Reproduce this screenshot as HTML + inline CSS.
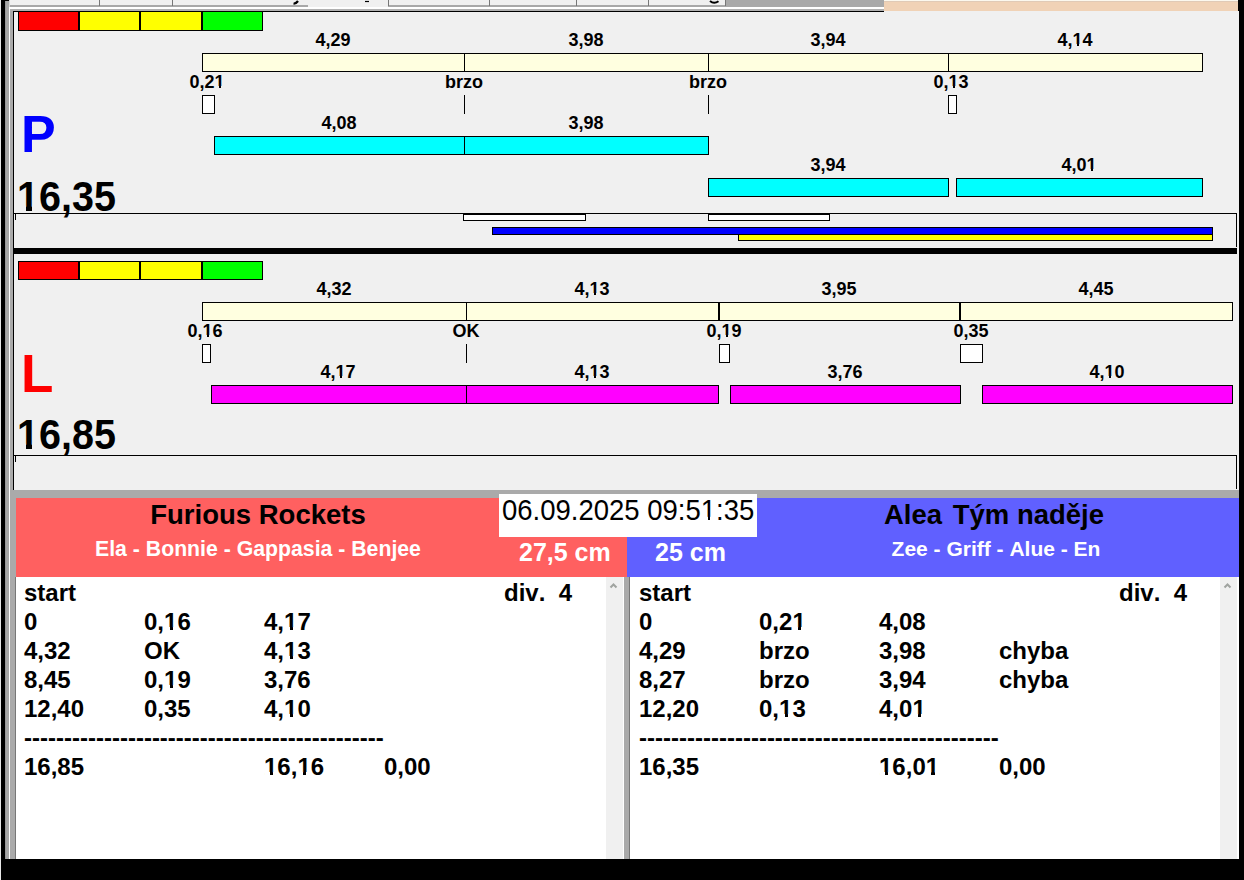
<!DOCTYPE html>
<html><head><meta charset="utf-8">
<style>
*{margin:0;padding:0;box-sizing:border-box}
html,body{width:1244px;height:880px;overflow:hidden;background:#000}
body{position:relative;font-kerning:none;font-family:"Liberation Sans",sans-serif;font-weight:bold;color:#000}
.a{position:absolute}
.bx{position:absolute;border:1px solid #000}
.lb{position:absolute;width:120px;text-align:center;font-size:18px;line-height:20px;white-space:nowrap}
.cr{background:#ffffe0}
.cy{background:#00ffff}
.mg{background:#ff00ff}
.wh{background:#fff}
.tk{position:absolute;width:1px;background:#000}
.ls{position:absolute;font-size:24px;line-height:29px}
.ls div{height:29px;position:relative}
.ls>div>span{position:absolute;top:0;white-space:pre}
.o{position:relative}
.o::before,.o::after{content:"";position:absolute;background:#f0f0f0;bottom:0.19em;height:0.14em}
.o::before{left:0.03em;width:0.203em}
.o::after{left:0.371em;width:0.2em}
.ow::before,.ow::after{background:#fff}
.or::before,.or::after{bottom:0.19em;height:0.13em}
.or::before{left:0.05em;width:0.201em}
.or::after{left:0.34em;width:0.2em}
</style></head><body>

<!-- left window frame strips -->
<div class="a" style="left:0;top:0;width:1px;height:880px;background:#e8e8e8"></div>
<div class="a" style="left:5px;top:1px;width:1px;height:858px;background:#999"></div>
<div class="a" style="left:6px;top:1px;width:3px;height:858px;background:#a8a8a8"></div>
<div class="a" style="left:9px;top:0;width:1px;height:7px;background:#d8d8d8"></div><div class="a" style="left:9px;top:7px;width:1px;height:852px;background:#fff"></div>
<div class="a" style="left:10px;top:9px;width:6px;height:850px;background:#aaa"></div>

<!-- top tab strip -->
<div class="a" style="left:10px;top:0;width:874px;height:11px;background:#f0f0f0"></div>
<div class="a" style="left:10px;top:5px;width:874px;height:2px;background:#a8a8a8"></div>
<div class="a" style="left:10px;top:7px;width:874px;height:2px;background:#fff"></div>
<div class="a" style="left:10px;top:9px;width:874px;height:2px;background:#b0b0b0"></div>
<div class="a" style="left:726px;top:0;width:158px;height:7px;background:#a9a9a9"></div>
<div class="tk" style="left:99px;top:0;height:6px;background:#777"></div>
<div class="tk" style="left:172px;top:0;height:6px;background:#777"></div>
<div class="tk" style="left:388px;top:0;height:6px;background:#777"></div>
<div class="tk" style="left:489px;top:0;height:6px;background:#777"></div>
<div class="tk" style="left:576px;top:0;height:6px;background:#777"></div>
<div class="tk" style="left:648px;top:0;height:6px;background:#777"></div>
<div class="tk" style="left:725px;top:0;height:6px;background:#777"></div>
<div class="a" style="left:308px;top:5px;width:80px;height:2px;background:#f0f0f0"></div>
<svg class="a" style="left:288px;top:0" width="440" height="8">
<path d="M5.5 3.5 Q8 3.8 10 1" stroke="#000" stroke-width="2.2" fill="none"/>
<path d="M77 1.5 L81 1.5" stroke="#000" stroke-width="1.2" fill="none"/>
<path d="M422 1 Q426 4.5 430.5 1.2" stroke="#000" stroke-width="2" fill="none"/>
</svg>
<!-- peach -->
<div class="a" style="left:884px;top:0;width:354px;height:1px;background:#fbf8ee"></div><div class="a" style="left:884px;top:1px;width:354px;height:11px;background:#f0d2b6;border-top:1px solid #e0cab6;border-bottom:1px solid #e4d2c2"></div><div class="a" style="left:884px;top:12px;width:354px;height:2px;background:#f4f0ec"></div>

<!-- main panel -->
<div class="a" style="left:13px;top:11px;width:1226px;height:479px;background:#f0f0f0;border-left:1px solid #000"></div>
<div class="a" style="left:13px;top:11px;width:871px;height:1px;background:#000"></div>

<!-- ===== P section ===== -->
<div class="bx" style="left:18px;top:11px;width:61px;height:20px;background:#f00"></div>
<div class="bx" style="left:79px;top:11px;width:61px;height:20px;background:#ff0"></div>
<div class="bx" style="left:140px;top:11px;width:62px;height:20px;background:#ff0"></div>
<div class="bx" style="left:202px;top:11px;width:61px;height:20px;background:#0f0"></div>

<!-- cream bar P -->
<div class="bx cr" style="left:202px;top:53px;width:263px;height:19px"></div>
<div class="bx cr" style="left:464px;top:53px;width:245px;height:19px"></div>
<div class="bx cr" style="left:708px;top:53px;width:241px;height:19px"></div>
<div class="bx cr" style="left:948px;top:53px;width:255px;height:19px"></div>
<div class="lb" style="left:273px;top:30px">4,29</div>
<div class="lb" style="left:526px;top:30px">3,98</div>
<div class="lb" style="left:768px;top:30px">3,94</div>
<div class="lb" style="left:1015px;top:30px">4,<span class="o">1</span>4</div>

<div class="lb" style="left:147px;top:72px">0,2<span class="o">1</span></div>
<div class="lb" style="left:404px;top:72px">brzo</div>
<div class="lb" style="left:648px;top:72px">brzo</div>
<div class="lb" style="left:891px;top:72px">0,<span class="o">1</span>3</div>

<div class="bx wh" style="left:202px;top:95px;width:13px;height:19px"></div>
<div class="tk" style="left:464px;top:95px;height:19px"></div>
<div class="tk" style="left:708px;top:95px;height:19px"></div>
<div class="bx wh" style="left:948px;top:95px;width:9px;height:19px"></div>

<div class="a" style="left:21px;top:106px;font-size:52px;line-height:56px;color:#0000ff">P</div>

<div class="lb" style="left:279px;top:113px">4,08</div>
<div class="lb" style="left:526px;top:113px">3,98</div>
<div class="bx cy" style="left:214px;top:136px;width:251px;height:19px"></div>
<div class="bx cy" style="left:464px;top:136px;width:245px;height:19px"></div>

<div class="lb" style="left:768px;top:155px">3,94</div>
<div class="lb" style="left:1019px;top:155px">4,0<span class="o">1</span></div>
<div class="bx cy" style="left:708px;top:178px;width:241px;height:19px"></div>
<div class="bx cy" style="left:956px;top:178px;width:247px;height:19px"></div>

<div class="a" style="left:17px;top:175px;font-size:39.5px;line-height:44px;transform:scaleY(1.06);transform-origin:0 35.7px"><span class="o">1</span>6,35</div>

<!-- P box -->
<div class="a" style="left:13px;top:213px;width:1224px;height:1px;background:#000"></div>
<div class="tk" style="left:15px;top:213px;height:7px"></div>
<div class="tk" style="left:1236px;top:213px;height:34px"></div>
<div class="bx wh" style="left:463px;top:214px;width:123px;height:7px"></div>
<div class="bx wh" style="left:708px;top:214px;width:122px;height:7px"></div>
<div class="bx" style="left:492px;top:227px;width:721px;height:8px;background:#0000ff"></div>
<div class="bx" style="left:738px;top:234px;width:475px;height:7px;background:#ff0"></div>

<div class="a" style="left:13px;top:248px;width:1224px;height:6px;background:#000"></div>

<!-- ===== L section ===== -->
<div class="bx" style="left:18px;top:261px;width:61px;height:19px;background:#f00"></div>
<div class="bx" style="left:79px;top:261px;width:61px;height:19px;background:#ff0"></div>
<div class="bx" style="left:140px;top:261px;width:62px;height:19px;background:#ff0"></div>
<div class="bx" style="left:202px;top:261px;width:61px;height:19px;background:#0f0"></div>

<div class="bx cr" style="left:202px;top:302px;width:265px;height:19px"></div>
<div class="bx cr" style="left:466px;top:302px;width:253px;height:19px"></div>
<div class="bx cr" style="left:719px;top:302px;width:241px;height:19px"></div>
<div class="bx cr" style="left:960px;top:302px;width:273px;height:19px"></div>
<div class="lb" style="left:274px;top:279px">4,32</div>
<div class="lb" style="left:532px;top:279px">4,<span class="o">1</span>3</div>
<div class="lb" style="left:779px;top:279px">3,95</div>
<div class="lb" style="left:1036px;top:279px">4,45</div>

<div class="lb" style="left:145px;top:321px">0,<span class="o">1</span>6</div>
<div class="lb" style="left:406px;top:321px">OK</div>
<div class="lb" style="left:664px;top:321px">0,<span class="o">1</span>9</div>
<div class="lb" style="left:911px;top:321px">0,35</div>

<div class="bx wh" style="left:202px;top:344px;width:9px;height:19px"></div>
<div class="tk" style="left:466px;top:344px;height:19px"></div>
<div class="bx wh" style="left:719px;top:344px;width:11px;height:19px"></div>
<div class="bx wh" style="left:960px;top:344px;width:23px;height:19px"></div>

<div class="a" style="left:21px;top:346px;font-size:53px;line-height:56px;color:#ff0000">L</div>

<div class="lb" style="left:278px;top:362px">4,<span class="o">1</span>7</div>
<div class="lb" style="left:532px;top:362px">4,<span class="o">1</span>3</div>
<div class="lb" style="left:785px;top:362px">3,76</div>
<div class="lb" style="left:1047px;top:362px">4,<span class="o">1</span>0</div>
<div class="bx mg" style="left:211px;top:385px;width:256px;height:19px"></div>
<div class="bx mg" style="left:466px;top:385px;width:253px;height:19px"></div>
<div class="bx mg" style="left:730px;top:385px;width:231px;height:19px"></div>
<div class="bx mg" style="left:982px;top:385px;width:251px;height:19px"></div>

<div class="a" style="left:17px;top:413px;font-size:39.5px;line-height:44px;transform:scaleY(1.06);transform-origin:0 35.7px"><span class="o">1</span>6,85</div>

<div class="a" style="left:13px;top:455px;width:1224px;height:1px;background:#000"></div>
<div class="tk" style="left:15px;top:455px;height:7px"></div>
<div class="tk" style="left:1236px;top:455px;height:34px"></div>

<!-- grey band -->
<div class="a" style="left:10px;top:490px;width:1229px;height:9px;background:#aaa"></div>

<!-- team headers -->
<div class="a" style="left:16px;top:498px;width:611px;height:79px;background:#ff6060"></div>
<div class="a" style="left:627px;top:498px;width:612px;height:79px;background:#6060ff"></div>
<div class="a" style="left:17px;top:498px;width:482px;text-align:center;font-size:27.5px;line-height:34px">Furious Rockets</div>
<div class="a" style="left:17px;top:536px;width:482px;text-align:center;font-size:21.25px;line-height:26px;color:#fff">Ela - Bonnie - Gappasia - Benjee</div>
<div class="a" style="left:755px;top:498px;width:478px;text-align:center;font-size:27.5px;line-height:34px">Alea<span style="word-spacing:3px"> </span>Tým naděje</div>
<div class="a" style="left:757px;top:536px;width:478px;text-align:center;font-size:21px;line-height:26px;color:#fff">Zee - Griff - Alue - En</div>
<div class="a" style="left:519px;top:537px;font-size:25px;line-height:30px;color:#fff;white-space:nowrap">27,5 cm</div>
<div class="a" style="left:655px;top:537px;font-size:25px;line-height:30px;color:#fff;white-space:nowrap">25 cm</div>

<!-- date box -->
<div class="a" style="left:499px;top:494px;width:258px;height:43px;background:#fff;font-weight:normal;font-size:27.5px;line-height:32px;padding-left:3px;white-space:nowrap"><span style="display:inline-block;position:relative;top:1px;transform:scaleY(1.05);transform-origin:0 25.5px">06.09.2025 09:5<span class="o ow or">1</span>:35</span></div>

<!-- lists -->
<div class="a" style="left:15px;top:577px;width:1px;height:282px;background:#777"></div>
<div class="a" style="left:16px;top:577px;width:590px;height:282px;background:#fff"></div>
<div class="a" style="left:606px;top:577px;width:17px;height:282px;background:#f0f0f0"></div>
<div class="a" style="left:623px;top:577px;width:1px;height:282px;background:#fff"></div>
<div class="a" style="left:624px;top:577px;width:6px;height:282px;background:#aaa"></div>
<div class="a" style="left:629px;top:577px;width:1px;height:282px;background:#777"></div>
<div class="a" style="left:630px;top:577px;width:590px;height:282px;background:#fff"></div>
<div class="a" style="left:1220px;top:577px;width:17px;height:282px;background:#f0f0f0"></div>
<div class="a" style="left:1237px;top:577px;width:2px;height:282px;background:#fff"></div>

<div class="ls" style="left:24px;top:578px;width:580px">
<div><span style="left:0">start</span><span style="left:480px">div.  4</span></div>
<div><span style="left:0">0</span><span style="left:120px">0,<span class="o ow">1</span>6</span><span style="left:240px">4,<span class="o ow">1</span>7</span></div>
<div><span style="left:0">4,32</span><span style="left:120px">OK</span><span style="left:240px">4,<span class="o ow">1</span>3</span></div>
<div><span style="left:0">8,45</span><span style="left:120px">0,<span class="o ow">1</span>9</span><span style="left:240px">3,76</span></div>
<div><span style="left:0">12,40</span><span style="left:120px">0,35</span><span style="left:240px">4,<span class="o ow">1</span>0</span></div>
<div><span style="left:0">---------------------------------------------</span></div>
<div><span style="left:0">16,85</span><span style="left:240px"><span class="o ow">1</span>6,<span class="o ow">1</span>6</span><span style="left:360px">0,00</span></div>
</div>

<div class="ls" style="left:639px;top:578px;width:580px">
<div><span style="left:0">start</span><span style="left:480px">div.  4</span></div>
<div><span style="left:0">0</span><span style="left:120px">0,2<span class="o ow">1</span></span><span style="left:240px">4,08</span></div>
<div><span style="left:0">4,29</span><span style="left:120px">brzo</span><span style="left:240px">3,98</span><span style="left:360px">chyba</span></div>
<div><span style="left:0">8,27</span><span style="left:120px">brzo</span><span style="left:240px">3,94</span><span style="left:360px">chyba</span></div>
<div><span style="left:0">12,20</span><span style="left:120px">0,<span class="o ow">1</span>3</span><span style="left:240px">4,0<span class="o ow">1</span></span></div>
<div><span style="left:0">---------------------------------------------</span></div>
<div><span style="left:0">16,35</span><span style="left:240px"><span class="o ow">1</span>6,0<span class="o ow">1</span></span><span style="left:360px">0,00</span></div>
</div>

<!-- scrollbar arrows -->
<svg class="a" style="left:608px;top:581px" width="12" height="10"><path d="M2.5 6.5 L5.5 3.5 L8.5 6.5" stroke="#a0a4a0" stroke-width="2" fill="none"/></svg>
<svg class="a" style="left:1222px;top:581px" width="12" height="10"><path d="M2.5 6.5 L5.5 3.5 L8.5 6.5" stroke="#a0a4a0" stroke-width="2" fill="none"/></svg>

</body></html>
